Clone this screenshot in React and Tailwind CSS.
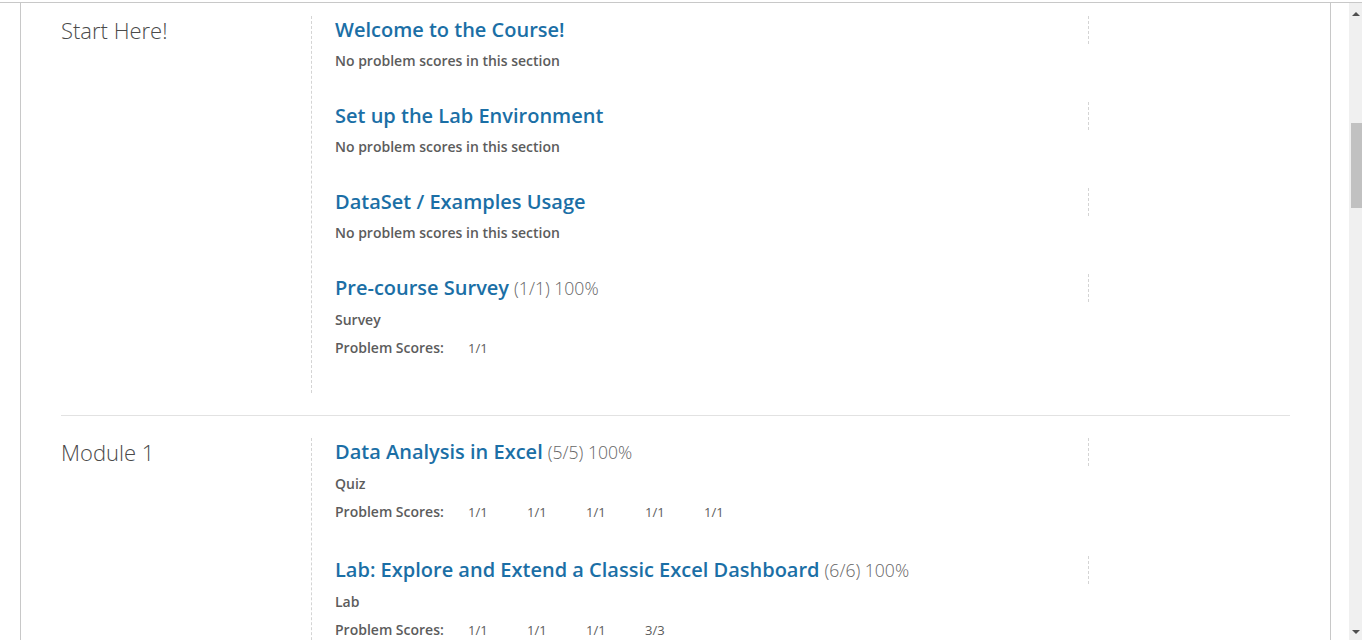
import React from 'react';

const chapters = [
    {
        name: 'Start Here!',
        sections: [
            { title: 'Welcome to the Course!' },
            { title: 'Set up the Lab Environment' },
            { title: 'DataSet / Examples Usage' },
            { title: 'Pre-course Survey', total: '(1/1) 100%', kind: 'Survey', scores: ['1/1'] },
        ],
    },
    {
        name: 'Module 1',
        sections: [
            { title: 'Data Analysis in Excel', total: '(5/5) 100%', kind: 'Quiz', scores: ['1/1', '1/1', '1/1', '1/1', '1/1'] },
            { title: 'Lab: Explore and Extend a Classic Excel Dashboard', total: '(6/6) 100%', kind: 'Lab', scores: ['1/1', '1/1', '1/1', '3/3'] },
        ],
    },
];

const Section = ({ section, last }) => {
    const graded = !!section.scores;
    return (
        <div className={graded ? (last ? 'pb-[35px]' : 'pb-[34px]') : 'pb-[31px]'}>
            {/* title row with the dashed chart slot on the right */}
            <div className="flex h-[28px]">
                <div className="w-[776px] pl-[23px] leading-[28px] whitespace-nowrap">
                    <span className="text-[20px] font-semibold text-[#1b6fa6]">{section.title}</span>
                    {section.total && (
                        <span className="ml-[5px] text-[17.6px] font-light text-[#666]">{section.total}</span>
                    )}
                </div>
                <div className="flex-1 border-l border-dashed border-[#d4d4d4]" />
            </div>
            {!graded ? (
                <p className="mt-[7px] pl-[23px] text-[14px] leading-[20px] font-semibold text-[#5c5c5c]">
                    No problem scores in this section
                </p>
            ) : (
                <>
                    <p className="mt-[8px] pl-[23px] text-[14px] leading-[20px] font-semibold text-[#5c5c5c]">{section.kind}</p>
                    <div className="mt-[8px] flex pl-[23px] text-[14px] leading-[20px] text-[#5c5c5c]">
                        <span className="w-[133px] font-semibold">Problem Scores:</span>
                        {section.scores.map((s, i) => (
                            <span key={i} className="w-[59px] text-[13px]">{s}</span>
                        ))}
                    </div>
                </>
            )}
        </div>
    );
};

const Chapter = ({ chapter }) => (
    <div className="flex">
        <h2 className="-mt-[1px] w-[250px] text-[22px] leading-[30px] font-light text-[#4a4a4a]">{chapter.name}</h2>
        <div className="flex-1 border-l border-dashed border-[#d4d4d4]">
            {chapter.sections.map((s, i) => (
                <Section key={s.title} section={s} last={i === chapter.sections.length - 1} />
            ))}
        </div>
    </div>
);

const App = () => {
    return (
        <div className="relative h-[640px] w-[1362px] overflow-hidden bg-white font-['Open_Sans',sans-serif]">
            <div className="h-[2px]" />
            <div className="h-px bg-[#c8c8c8]" />
            <div className="flex h-[637px]">
                <div className="w-[20px]" />
                {/* page body */}
                <div className="w-[1311px] border-x border-[#c8c8c8] px-[40px] pt-[13px]">
                    <Chapter chapter={chapters[0]} />
                    <div className="my-[22px] h-px bg-[#e2e2e2]" />
                    <Chapter chapter={chapters[1]} />
                </div>
                <div className="w-[18px]" />
                {/* scrollbar */}
                <div className="relative w-[13px] bg-[#f0f0f0]">
                    <div className="absolute left-[3px] top-[9px] h-0 w-0 border-x-[4px] border-b-[4px] border-x-transparent border-b-[#505050]" />
                    <div className="absolute left-[2px] right-0 top-[120px] h-[85px] bg-[#c1c1c1]" />
                    <div className="absolute bottom-[6px] left-[3px] h-0 w-0 border-x-[4px] border-t-[4px] border-x-transparent border-t-[#505050]" />
                </div>
            </div>
            {/* bottom edge */}
            <div className="flex h-[2px]">
                <div className="w-[48px] bg-[#2f4317]" />
                <div className="w-[343px] bg-[#c8c8c8]" />
                <div className="flex-1 bg-[#2f4317]" />
            </div>
        </div>
    );
};

export default App;
